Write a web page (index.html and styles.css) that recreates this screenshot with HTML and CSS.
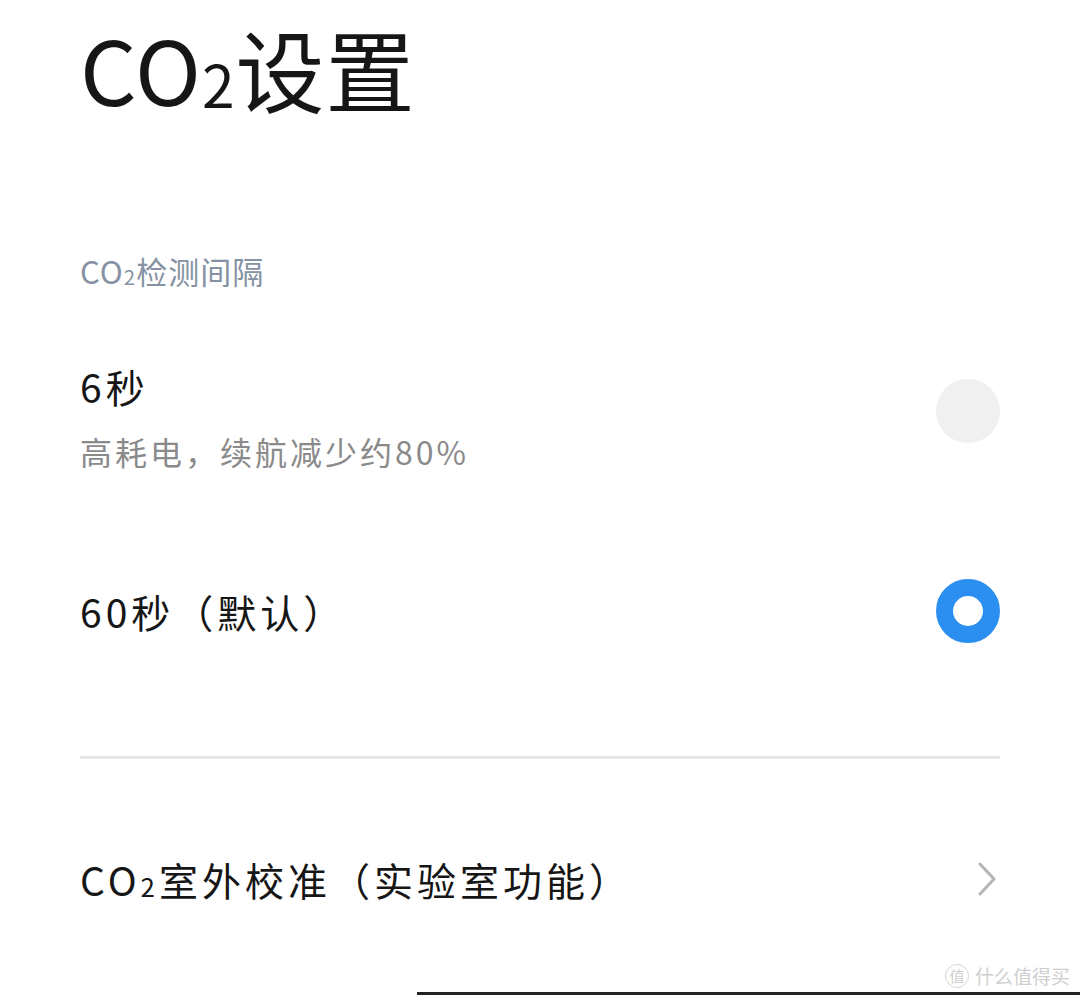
FILE: index.html
```html
<!doctype html>
<html lang="zh-CN">
<head>
  <meta charset="utf-8">
  <link rel="stylesheet" href="styles.css">
</head>
<body>

  <div class="page">
    <h1 class="page-title">CO<span class="sub">2</span>设置</h1>

    <div class="section-label">CO<span class="sub">2</span>检测间隔</div>

    <div class="option option-first">
      <div class="option-text">
        <div class="option-name">6秒</div>
        <div class="option-desc">高耗电，续航减少约80%</div>
      </div>
      <div class="radio"></div>
    </div>

    <div class="option option-second">
      <div class="option-text">
        <div class="option-name">60秒（默认）</div>
      </div>
      <div class="radio radio-checked"></div>
    </div>

    <div class="divider"></div>

    <div class="link-row">
      <div class="option-name">CO<span class="sub">2</span>室外校准（实验室功能）</div>
      <svg class="chevron" width="20" height="34" viewBox="0 0 20 34">
        <path d="M3 2 L17 17 L3 32" fill="none" stroke="#b5b5b5" stroke-width="3" stroke-linecap="round" stroke-linejoin="round"/>
      </svg>
    </div>
  </div>

  <div class="watermark">
    <span class="watermark-badge">值</span>
    <span>什么值得买</span>
  </div>
  <div class="home-bar"></div>

</body>
</html>
```

FILE: styles.css
```css
html, body {
  margin: 0;
  padding: 0;
  background-color: #fff;
  font-family: "Noto Sans CJK SC", sans-serif;
  color: #1a1a1a;
  text-spacing-trim: space-all;
}

.page {
  padding: 0 80px;
  height: 995px;
  box-sizing: border-box;
}

/* small "2" of CO2, kept out of the line box height */
.sub {
  font-size: 0.66em;
  line-height: 0;
  vertical-align: -0.04em;
}

.page-title {
  margin: 0;
  padding-top: 26px;
  font-size: 89px;
  line-height: 84px;
  font-weight: 400;
  letter-spacing: 1px;
  color: #161616;
}

.section-label {
  margin-top: 141px;
  font-size: 31px;
  line-height: 40px;
  color: #8592a3;
  letter-spacing: 1px;
}

.option {
  display: flex;
  align-items: center;
  justify-content: space-between;
}

.option-first {
  margin-top: 73px;
}

.option-first .radio {
  margin-bottom: 13px;
}

.option-second {
  margin-top: 108px;
}

.option-name {
  font-size: 39px;
  line-height: 44px;
  letter-spacing: 4px;
  color: #161616;
}

.option-desc {
  margin-top: 23px;
  font-size: 32px;
  line-height: 40px;
  letter-spacing: 3px;
  color: #8a8a8a;
}

.radio {
  width: 64px;
  height: 64px;
  border-radius: 50%;
  background-color: #f0f0f0;
  box-sizing: border-box;
}

.radio-checked {
  background-color: #fff;
  border: 17px solid #2a8ff0;
}

.divider {
  margin-top: 113px;
  height: 3px;
  background-color: #e6e6e6;
}

.link-row {
  margin-top: 98px;
  display: flex;
  align-items: center;
  justify-content: space-between;
}

.chevron {
  margin-right: 3px;
}

.watermark {
  position: absolute;
  right: 10px;
  top: 962px;
  display: flex;
  align-items: center;
  gap: 6px;
  font-size: 19px;
  color: #cfcfcf;
}

.watermark-badge {
  display: inline-flex;
  align-items: center;
  justify-content: center;
  width: 22px;
  height: 22px;
  border: 1px solid #d4d4d4;
  border-radius: 50%;
  font-size: 15px;
}

.home-bar {
  position: absolute;
  left: 417px;
  right: 0;
  top: 992px;
  height: 3px;
  background-color: #222;
}
```
